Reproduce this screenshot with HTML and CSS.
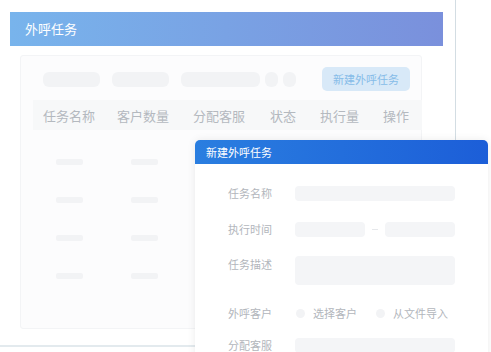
FILE: index.html
```html
<!DOCTYPE html>
<html lang="zh-CN">
<head>
  <meta charset="UTF-8" />
  <title>外呼任务</title>
  <link rel="stylesheet" href="styles.css">
</head>
<body>
  <div class="frame">
    <div class="page_title">外呼任务</div>
    <div class="task_card">
      <div class="filter_bar">
        <span class="sk sk_a"></span>
        <span class="sk sk_a"></span>
        <span class="sk sk_b"></span>
        <span class="sk sk_c"></span>
        <span class="sk sk_c"></span>
        <button class="new_btn">新建外呼任务</button>
      </div>
      <div class="table_head">
        <span class="col1">任务名称</span>
        <span class="col2">客户数量</span>
        <span class="col3">分配客服</span>
        <span class="col4">状态</span>
        <span class="col5">执行量</span>
        <span class="col6">操作</span>
      </div>
      <div class="table_body">
        <div class="row"><span class="cell"></span><span class="cell"></span></div>
        <div class="row"><span class="cell"></span><span class="cell"></span></div>
        <div class="row"><span class="cell"></span><span class="cell"></span></div>
        <div class="row"><span class="cell"></span><span class="cell"></span></div>
      </div>
    </div>
  </div>

  <div class="dialog">
    <div class="dialog_title">新建外呼任务</div>
    <div class="dialog_body">
      <div class="form_row">
        <label>任务名称</label>
        <div class="input"></div>
      </div>
      <div class="form_row">
        <label>执行时间</label>
        <div class="range">
          <div class="input"></div>
          <span class="dash"></span>
          <div class="input"></div>
        </div>
      </div>
      <div class="form_row top">
        <label>任务描述</label>
        <div class="input textarea"></div>
      </div>
      <div class="form_row radio_row">
        <label>外呼客户</label>
        <div class="radios">
          <span class="radio"><i></i>选择客户</span>
          <span class="radio"><i></i>从文件导入</span>
        </div>
      </div>
      <div class="form_row">
        <label>分配客服</label>
        <div class="input"></div>
      </div>
    </div>
  </div>
</body>
</html>
```

FILE: styles.css
```css
body {
  margin: 0;
  background: #fff;
  font-family: 'Noto Sans CJK SC', 'Noto Sans', sans-serif;
  overflow: hidden;
}

.frame {
  width: 456px;
  height: 347px;
  border-right: 1px solid #d3dde3;
  border-bottom: 2px solid #e3eaee;
  box-sizing: border-box;
  padding-top: 12px;
}

.page_title {
  margin-left: 10px;
  width: 433px;
  height: 34px;
  box-sizing: border-box;
  padding-left: 15px;
  line-height: 34px;
  font-size: 13px;
  color: #fff;
  background: linear-gradient(to right, #78b4ec, #7a90dc);
}

.task_card {
  margin: 9px 0 0 20px;
  width: 402px;
  height: 274px;
  box-sizing: border-box;
  background: #fcfcfd;
  border: 1px solid #f3f4f6;
  border-radius: 3px;
  padding: 11px 0 0 12px;
}

.filter_bar {
  display: flex;
  align-items: center;
  height: 24px;
  padding-left: 10px;
}

.sk {
  height: 15px;
  background: #f2f3f5;
  border-radius: 6px;
  margin-right: 12px;
}
.sk_a { width: 57px; }
.sk_b { width: 79px; margin-right: 5px; }
.sk_c { width: 13px; margin-right: 5px; }

.new_btn {
  margin-left: 21px;
  width: 88px;
  height: 24px;
  border: none;
  border-radius: 5px;
  background: #d8e9f8;
  color: #86bce8;
  font-family: inherit;
  font-size: 11px;
  padding: 0;
}

.task_card .table_head {
  margin-top: 9px;
}
.table_head {
  width: 389px;
  height: 30px;
  background: #f7f8f9;
  display: flex;
  align-items: center;
  font-size: 13px;
  color: #b4b9bf;
  position: relative;
}
.table_head span { position: absolute; }
.col1 { left: 10px; }
.col2 { left: 84px; }
.col3 { left: 160px; }
.col4 { left: 237px; }
.col5 { left: 287px; }
.col6 { left: 350px; }

.table_body {
  padding-top: 29px;
}
.row {
  display: flex;
  gap: 48px;
  padding-left: 23px;
  height: 38px;
}
.cell {
  width: 27px;
  height: 6px;
  background: #f2f3f5;
  border-radius: 2px;
}

.dialog {
  position: absolute;
  left: 195px;
  top: 140px;
  width: 293px;
  height: 230px;
  background: #fff;
  border-radius: 5px 5px 0 0;
  box-shadow: 0 0 8px rgba(0, 0, 0, 0.08);
}

.dialog_title {
  height: 24px;
  line-height: 24px;
  padding-left: 11px;
  font-size: 11px;
  color: #fff;
  border-radius: 5px 5px 0 0;
  background: linear-gradient(to right, #2a7ee0, #1c5ed8);
}

.dialog_body {
  padding-top: 21px;
}

.form_row {
  display: flex;
  align-items: center;
  margin-bottom: 20px;
  font-size: 11px;
  color: #b2b6bc;
}
.form_row label {
  width: 100px;
  text-align: right;
  padding-right: 23px;
  box-sizing: border-box;
}
.form_row.top {
  align-items: flex-start;
  margin-top: -1px;
}
.radio_row {
  margin-top: 1px;
  margin-bottom: 16px;
}

.input {
  width: 160px;
  height: 15px;
  background: #f4f5f7;
  border-radius: 4px;
}
.textarea { height: 29px; }

.range {
  display: flex;
  align-items: center;
}
.range .input { width: 70px; }
.dash {
  width: 6px;
  height: 1px;
  background: #e6e8eb;
  margin: 0 7px;
}

.radios {
  display: flex;
  gap: 19px;
  margin-left: 1px;
}
.radio {
  display: flex;
  align-items: center;
}
.radio i {
  width: 9px;
  height: 9px;
  border-radius: 50%;
  background: #f2f3f5;
  margin-right: 8px;
}
```
